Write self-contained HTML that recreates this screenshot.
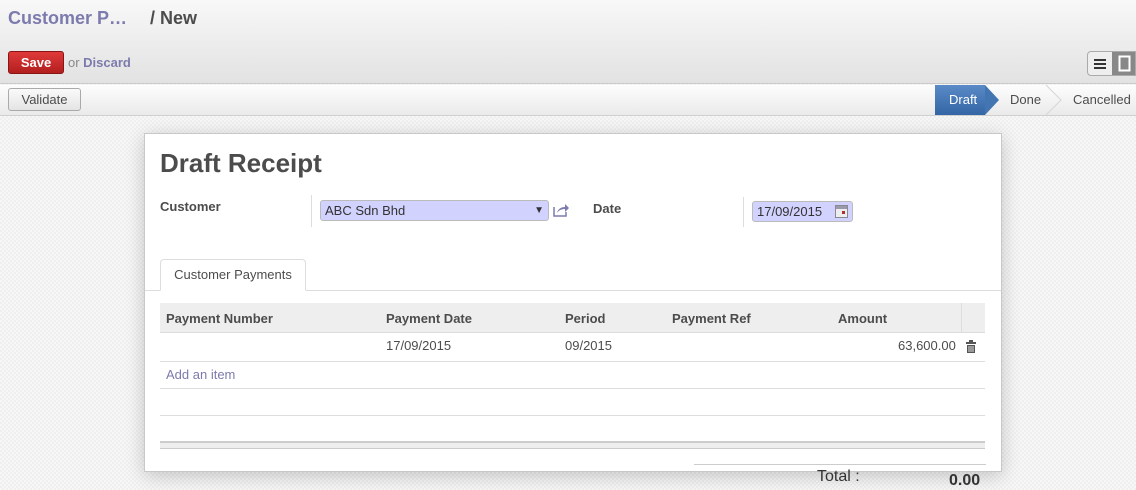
<!DOCTYPE html>
<html><head><meta charset="utf-8"><style>
*{box-sizing:border-box;margin:0;padding:0}
body{width:1136px;height:487px;overflow:hidden;font-family:"Liberation Sans",Arial,sans-serif;font-size:13px;color:#4c4c4c;background:#f7f7f7;position:relative;
background-image:linear-gradient(45deg,#efefef 25%,transparent 25%,transparent 75%,#efefef 75%),linear-gradient(45deg,#efefef 25%,transparent 25%,transparent 75%,#efefef 75%);background-size:4px 4px;background-position:0 0,2px 2px}
.top{position:absolute;left:0;top:0;width:1136px;height:84px;background:linear-gradient(#f8f8f8,#e2e2e2);border-bottom:1px solid #cacaca}
.bc{position:absolute;left:8px;top:8px;font-size:18px;font-weight:bold;color:#7c7bad}
.bc b{color:#4c4c4c;position:absolute;left:142px;white-space:nowrap}
.save{position:absolute;left:8px;top:51px;width:56px;height:23px;background:linear-gradient(#df3a3a,#b21f1f);border:1px solid #8b1515;border-radius:3px;color:#fff;font-weight:bold;text-align:center;line-height:21px}
.or{position:absolute;left:68px;top:55px;color:#888}
.or span{color:#7c7bad;font-weight:bold}
.vs{position:absolute;left:1087px;top:51px;width:49px;height:25px;border:1px solid #aaa;border-radius:4px 0 0 4px;background:#eee;overflow:hidden}
.vs .a{position:absolute;left:0;top:0;width:24px;height:23px}
.vs .b{position:absolute;left:24px;top:0;width:25px;height:23px;background:#888}
.bar{position:absolute;left:0;top:85px;width:1136px;height:31px;background:linear-gradient(#fdfdfd,#eaeaea);border-bottom:1px solid #d0d0d0}
.val{position:absolute;left:8px;top:3px;width:73px;height:23px;border:1px solid #aaa;border-radius:3px;background:linear-gradient(#fafafa,#e4e4e4);text-align:center;line-height:21px;color:#4c4c4c}
.draft{position:absolute;left:935px;top:0;width:50px;height:30px;background:linear-gradient(#5a8bc7,#3465a4);color:#fff;line-height:30px;padding-left:14px}
.draft:after{content:"";position:absolute;right:-14px;top:0;border-left:14px solid #4475b3;border-top:15px solid transparent;border-bottom:15px solid transparent}
.st{position:absolute;top:0;line-height:30px;color:#4c4c4c}
.sheet{position:absolute;left:144px;top:133px;width:858px;height:339px;background:#fff;border:1px solid #c8c8c8;box-shadow:0 4px 18px rgba(0,0,0,.2)}
h1{position:absolute;left:15px;top:14px;font-size:26px;color:#4c4c4c}
.lbl{position:absolute;font-weight:bold;color:#4c4c4c}
.vl{position:absolute;width:1px;background:#ddd}
.inp{position:absolute;background:#d2d2ff;border:1px solid #bbb;border-radius:3px;height:21px;line-height:19px;padding-left:4px;color:#333}
.tab{position:absolute;left:15px;top:125px;width:146px;height:32px;border:1px solid #ddd;border-bottom:1px solid #fff;border-radius:4px 4px 0 0;background:#fff;text-align:center;line-height:30px;z-index:2}
.tline{position:absolute;left:0;top:156px;width:856px;height:1px;background:#ddd}
.th{position:absolute;left:15px;top:169px;width:825px;height:30px;background:#eee;border-bottom:1px solid #ddd}
.th span{position:absolute;top:8px;font-weight:bold;color:#4c4c4c}
.hl{position:absolute;height:1px;background:#ddd;left:15px;width:825px}
.c{position:absolute}
</style></head><body>
<div class="top">
<div class="bc">Customer P…<b>/ New</b></div>
<div class="save">Save</div>
<div class="or">or <span>Discard</span></div>
<div class="vs"><div class="a"><svg width="24" height="23"><rect x="6" y="7" width="12" height="2" fill="#333"/><rect x="6" y="11" width="12" height="2" fill="#333"/><rect x="6" y="15" width="12" height="2" fill="#333"/></svg></div><div class="b"><svg width="25" height="23"><rect x="7.5" y="4.5" width="10" height="14" fill="none" stroke="#fff" stroke-width="2"/></svg></div></div>
</div>
<div class="bar">
<div class="val">Validate</div>
<div class="draft">Draft</div>
<div class="st" style="left:1010px">Done</div>
<svg style="position:absolute;left:1045px;top:0" width="18" height="31"><path d="M1 0 L16 15 L1 30" fill="none" stroke="#d6d6d6"/></svg>
<div class="st" style="left:1073px">Cancelled</div>
</div>
<div class="sheet">
<h1>Draft Receipt</h1>
<div class="lbl" style="left:15px;top:65px">Customer</div>
<div class="vl" style="left:166px;top:61px;height:32px"></div>
<div class="inp" style="left:175px;top:66px;width:229px">ABC Sdn Bhd<span style="position:absolute;right:4px;font-size:10px">▼</span></div>
<svg style="position:absolute;left:408px;top:69px" width="16" height="14"><path d="M1 4v9h12v-4" fill="none" stroke="#7c7bad" stroke-width="1.5"/><path d="M4 10c1-4 4-6 8-6V1l4 4-4 4V6c-3 0-6 1-8 4z" fill="#7c7bad"/></svg>
<div class="lbl" style="left:448px;top:67px">Date</div>
<div class="vl" style="left:598px;top:63px;height:30px"></div>
<div class="inp" style="left:607px;top:67px;width:101px">17/09/2015<svg style="position:absolute;right:4px;top:3px" width="13" height="13"><rect x=".5" y=".5" width="12" height="12" fill="#eee" stroke="#889"/><rect x="1" y="1" width="11" height="3" fill="#99a"/><rect x="7" y="6" width="3" height="3" fill="#a33"/></svg></div>
<div class="tab">Customer Payments</div>
<div class="tline"></div>
<div class="th"><span style="left:6px">Payment Number</span><span style="left:226px">Payment Date</span><span style="left:405px">Period</span><span style="left:512px">Payment Ref</span><span style="left:678px">Amount</span><div style="position:absolute;left:801px;top:0;width:1px;height:30px;background:#ddd"></div></div>
<div class="c" style="left:241px;top:204px">17/09/2015</div>
<div class="c" style="left:420px;top:204px">09/2015</div>
<div class="c" style="left:753px;top:204px">63,600.00</div>
<svg style="position:absolute;left:821px;top:206px" width="10" height="13"><rect x="3" y="0" width="4" height="2" fill="#555"/><rect x="0" y="2" width="10" height="2" fill="#555"/><rect x="1" y="5" width="8" height="8" fill="#555"/><path d="M3 6v6M5 6v6M7 6v6" stroke="#fff" stroke-width=".8"/></svg>
<div class="hl" style="top:227px"></div>
<div class="c" style="left:21px;top:233px;color:#7c7bad">Add an item</div>
<div class="hl" style="top:254px"></div>
<div class="hl" style="top:281px"></div>
<div class="hl" style="top:307px;height:8px;background:#eee;border-top:2px solid #ccc;border-bottom:1px solid #ccc"></div>
</div>
<div style="position:absolute;left:694px;top:464px;width:292px;height:1px;background:#ccc"></div>
<div style="position:absolute;left:817px;top:468px;font-size:16px;color:#333">Total :</div>
<div style="position:absolute;left:949px;top:472px;font-size:16px;font-weight:bold;color:#333">0.00</div>
</body></html>
